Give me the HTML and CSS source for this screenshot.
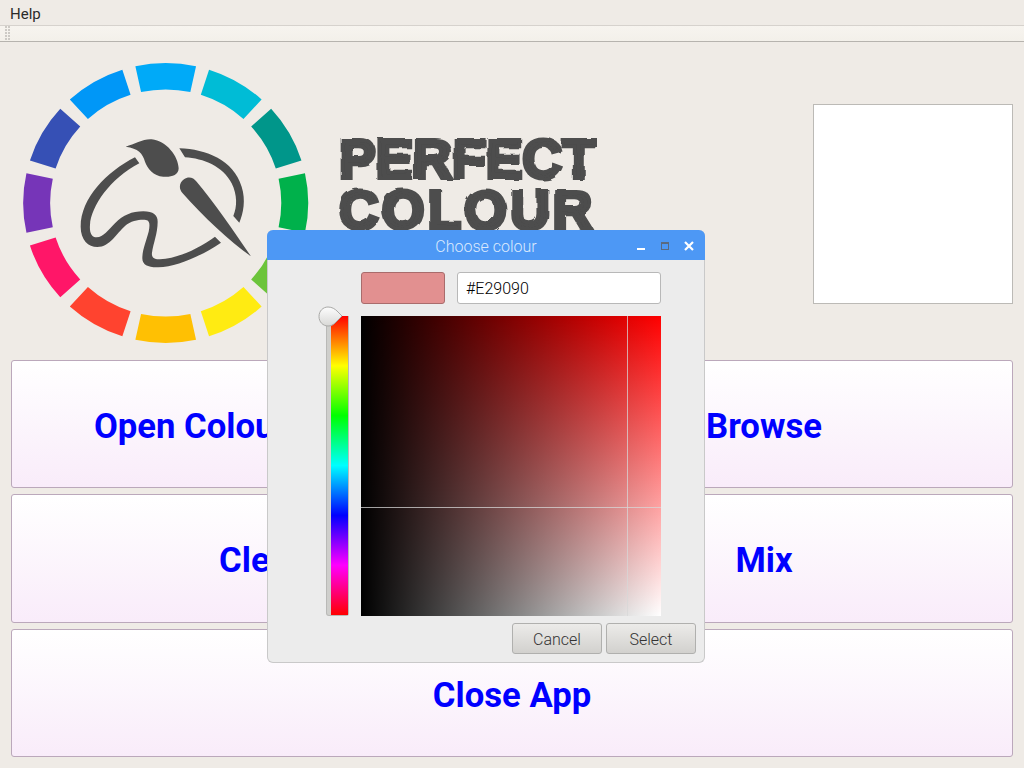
FILE: index.html
```html
<!DOCTYPE html>
<html lang="en">
<head>
  <meta charset="UTF-8">
  <title>Perfect Colour</title>
  <link rel="stylesheet" href="styles.css">
</head>
<body>
  <div class="menubar"><span class="menu-item">Help</span></div>
  <div class="toolbar"><span class="grip"></span></div>

  <div class="content">
    <div class="header">
      <svg class="logo" width="330" height="318" viewBox="0 42 330 318">
        <defs>
          <path id="seg" d="M-29.8 -136.8 A140 140 0 0 1 29.8 -136.8 L24.2 -110.9 A113.5 113.5 0 0 0 -24.2 -110.9 Z"/>
        </defs>
        <!-- colour ring, 12 segments clockwise from the top -->
        <g transform="translate(165.7 203) scale(1.018 1)">
          <use href="#seg" fill="#00aaf8"/>
          <use href="#seg" fill="#00bcd6" transform="rotate(30)"/>
          <use href="#seg" fill="#00968a" transform="rotate(60)"/>
          <use href="#seg" fill="#00b14b" transform="rotate(90)"/>
          <use href="#seg" fill="#6cc43b" transform="rotate(120)"/>
          <use href="#seg" fill="#ffeb12" transform="rotate(150)"/>
          <use href="#seg" fill="#ffc003" transform="rotate(180)"/>
          <use href="#seg" fill="#ff432f" transform="rotate(210)"/>
          <use href="#seg" fill="#ff1668" transform="rotate(240)"/>
          <use href="#seg" fill="#7635b8" transform="rotate(270)"/>
          <use href="#seg" fill="#3650b5" transform="rotate(300)"/>
          <use href="#seg" fill="#0097f7" transform="rotate(330)"/>
        </g>
        <!-- palette and brush -->
        <g transform="translate(60 120) scale(.3333)" fill="#4d4d4d">
          <path d="M225 112 C140 155 62 235 62 320 C62 360 85 381 112 381 C150 381 170 340 195 318 C215 300 245 298 258 300 C270 302 270 315 266 335 C258 365 247 390 247 415 C247 435 265 443 295 442 C350 440 420 410 483 368 L465 350 C410 390 350 415 300 418 C282 419 274 412 276 398 C280 370 293 340 293 305 C293 285 280 274 250 274 C215 274 190 285 165 310 C145 330 130 352 110 352 C95 352 88 338 90 315 C93 260 150 175 238 130 Z"/>
          <path d="M197 80 C225 72 250 56 275 58 C320 62 355 110 356 145 C356 168 330 172 310 170 C280 168 262 145 255 125 C248 100 235 85 197 80 Z"/>
          <path d="M358 85 C440 88 520 120 545 200 C558 240 550 280 538 308 L520 288 C532 260 532 225 515 190 C490 140 430 115 375 112 Z"/>
          <path d="M372 178 C385 168 400 172 410 185 C460 245 520 330 573 409 C510 365 430 290 368 220 C355 205 358 188 372 178 Z"/>
        </g>
      </svg>
      <div class="wordmark">
        <div class="word-top">PERFECT</div>
        <div class="word-bottom">COLOUR</div>
      </div>
      <div class="preview"></div>
    </div>

    <div class="buttons">
      <button class="big-btn">Open Colour Chooser</button>
      <button class="big-btn">Browse</button>
      <button class="big-btn">Clear</button>
      <button class="big-btn">Mix</button>
      <button class="big-btn wide">Close App</button>
    </div>
  </div>

  <div class="dialog">
    <div class="titlebar">
      <span class="title">Choose colour</span>
      <span class="win-btn win-min"></span>
      <span class="win-btn win-max"></span>
      <svg class="win-close" width="10" height="10" viewBox="0 0 10 10">
        <path d="M1 1 L9 9 M9 1 L1 9" stroke="#fff" stroke-width="2.2"/>
      </svg>
    </div>
    <div class="dialog-body">
      <div class="colour-row">
        <div class="swatch"></div>
        <input class="hex-input" type="text" value="#E29090">
      </div>
      <div class="picker-row">
        <div class="hue-slider">
          <div class="hue-bar"></div>
          <svg class="hue-handle" width="26" height="22" viewBox="0 0 26 22">
            <defs>
              <linearGradient id="knob" x1="0" y1="0" x2="0" y2="1">
                <stop offset="0" stop-color="#fdfdfd"/>
                <stop offset="1" stop-color="#d8d8d6"/>
              </linearGradient>
            </defs>
            <path d="M10 1 C14 1 17 3 19 5 L24 10 L17 17 C15 19 13 20 10 20 C5 20 1 16 1 10.5 C1 5 5 1 10 1 Z" fill="url(#knob)" stroke="#a9a9a7"/>
          </svg>
        </div>
        <div class="sv-square">
          <span class="cross-v"></span>
          <span class="cross-h"></span>
        </div>
      </div>
      <div class="dialog-actions">
        <button class="dlg-btn">Cancel</button>
        <button class="dlg-btn">Select</button>
      </div>
    </div>
  </div>

  <svg class="filters" width="0" height="0">
    <filter id="rough" x="-5%" y="-5%" width="110%" height="110%">
      <feTurbulence type="fractalNoise" baseFrequency="0.06" numOctaves="2" seed="4"/>
      <feDisplacementMap in="SourceGraphic" scale="4"/>
    </filter>
  </svg>
</body>
</html>
```

FILE: styles.css
```css
/* General Styles */
body {
  margin: 0;
  width: 1024px;
  height: 768px;
  overflow: hidden;
  position: relative;
  display: flex;
  flex-direction: column;
  background-color: #efebe6;
  font-family: Roboto, sans-serif;
}

/* Menu and toolbar */
.menubar {
  box-sizing: border-box;
  height: 25px;
  display: flex;
  align-items: center;
  padding: 2px 0 0 10px;
  font-size: 15px;
  color: #2a2a2a;
}

.toolbar {
  height: 15px;
  border-top: 1px solid #d6d2cd;
  border-bottom: 1px solid #b6b3ae;
  background: linear-gradient(#f7f4ef, #f3f0ea);
  padding-left: 5px;
}

.grip {
  display: block;
  width: 6px;
  height: 15px;
  background-image: radial-gradient(circle at 1px 1px, #cdcac5 1px, transparent 1px);
  background-size: 3px 3px;
}

/* Main area */
.content {
  flex: 1;
  display: flex;
  flex-direction: column;
  padding: 0 11px 11px;
}

.header {
  height: 318px;
  margin-left: -11px;
  display: flex;
}

.logo {
  flex: none;
}

.wordmark {
  margin: 92px 0 0 9px;
  font-family: "Liberation Sans", sans-serif;
  font-weight: bold;
  font-size: 55px;
  line-height: 51px;
  color: #4d4d4d;
  -webkit-text-stroke: 4px #4d4d4d;
  filter: url(#rough);
}

.word-top {
  letter-spacing: 0;
}

.word-bottom {
  letter-spacing: 3px;
}

.preview {
  width: 198px;
  height: 198px;
  margin: 62px 0 0 auto;
  border: 1px solid #bcbab6;
  background-color: #fff;
}

.buttons {
  flex: 1;
  display: grid;
  grid-template-columns: 1fr 1fr;
  grid-auto-rows: 1fr;
  gap: 6px;
}

.big-btn {
  border: 1px solid #bba8bb;
  border-radius: 3px;
  background: linear-gradient(#fff, #f9ecfa);
  color: #0000ff;
  font-family: Roboto, sans-serif;
  font-weight: bold;
  font-size: 34.67px;
  padding: 4px 0 0;
}

.big-btn.wide {
  grid-column: span 2;
}

/* Colour dialog */
.dialog {
  position: absolute;
  left: 267px;
  top: 230px;
  width: 438px;
  height: 433px;
  box-sizing: border-box;
  border: 1px solid #c9c9c9;
  border-top: none;
  border-radius: 6px;
  background-color: #ececec;
}

.titlebar {
  position: relative;
  height: 30px;
  margin: 0 -1px;
  border-radius: 6px 6px 0 0;
  background-color: #4d98f5;
  text-align: center;
  line-height: 33px;
}

.title {
  font-size: 16px;
  font-weight: 300;
  color: #dbe9fd;
}

.win-btn {
  position: absolute;
  box-sizing: border-box;
}

.win-min {
  left: 370px;
  top: 18px;
  width: 8px;
  height: 2px;
  background-color: #fff;
}

.win-max {
  left: 394px;
  top: 12px;
  width: 8px;
  height: 8px;
  border: 1px solid #5a6a80;
  border-top-width: 2px;
}

.win-close {
  position: absolute;
  left: 417px;
  top: 11px;
}

.dialog-body {
  padding: 12px 8px 0 58px;
}

.colour-row {
  display: flex;
  gap: 12px;
  padding-left: 35px;
}

.swatch {
  box-sizing: border-box;
  width: 84px;
  height: 32px;
  border: 1px solid #a96c6c;
  border-radius: 3px;
  background-color: #e29090;
}

.hex-input {
  box-sizing: border-box;
  width: 204px;
  height: 32px;
  border: 1px solid #b8b8b8;
  border-radius: 3px;
  padding: 0 8px;
  font-family: Roboto, sans-serif;
  font-size: 16px;
  font-weight: 300;
  color: #000;
}

.picker-row {
  display: flex;
  gap: 12px;
  margin-top: 12px;
}

.hue-slider {
  position: relative;
  box-sizing: border-box;
  width: 23px;
  height: 300px;
  padding-left: 4px;
  border: 1px solid #b9b9b7;
  border-top: none;
  border-radius: 0 0 3px 3px;
  background-color: #cfcfcc;
}

.hue-bar {
  height: 299px;
  background: linear-gradient(#f00, #ff0 16.67%, #0f0 33.33%, #0ff 50%, #00f 66.67%, #f0f 83.33%, #f00);
}

.hue-handle {
  position: absolute;
  left: -9px;
  top: -10px;
}

.sv-square {
  position: relative;
  width: 300px;
  height: 300px;
  background:
    linear-gradient(to right, #000, rgba(0, 0, 0, 0)),
    linear-gradient(#f00, #fff);
}

.cross-v {
  position: absolute;
  left: 266px;
  top: 0;
  width: 1px;
  height: 100%;
  background-color: rgba(215, 215, 215, 0.75);
}

.cross-h {
  position: absolute;
  left: 0;
  top: 191px;
  width: 100%;
  height: 1px;
  background-color: rgba(215, 215, 215, 0.75);
}

.dialog-actions {
  display: flex;
  justify-content: flex-end;
  gap: 4px;
  margin-top: 7px;
}

.dlg-btn {
  width: 90px;
  height: 31px;
  padding: 2px 0 0;
  border: 1px solid #b0b0ae;
  border-radius: 3px;
  background: linear-gradient(#ecebe9, #d2d1ce);
  font-family: Roboto, sans-serif;
  font-size: 16px;
  font-weight: 300;
  color: #333;
}

.filters {
  position: absolute;
}
```
